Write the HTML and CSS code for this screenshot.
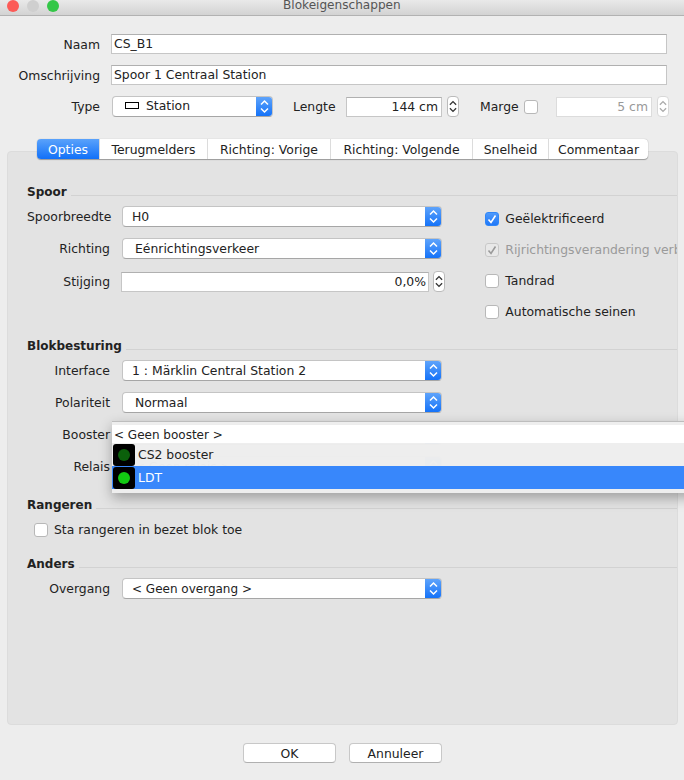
FILE: index.html
```html
<!DOCTYPE html>
<html lang="nl">
<head>
    <meta charset="UTF-8">
    <title>Blokeigenschappen</title>
    <link rel="stylesheet" href="styles.css">
</head>
<body>
    <svg class="defs" width="0" height="0">
        <symbol id="updown" viewBox="0 0 9 15">
            <path d="M1 5.5 L4.5 2 L8 5.5 M1 9.5 L4.5 13 L8 9.5" fill="none" stroke="currentColor" stroke-width="1.5"/>
        </symbol>
    </svg>

    <div class="window">
        <div class="titlebar">
            <span class="light red"></span>
            <span class="light grey"></span>
            <span class="light green"></span>
            <span class="title">Blokeigenschappen</span>
        </div>

        <div class="top-form">
            <div class="top-row">
                <label class="top-label">Naam</label>
                <div class="input wide">CS_B1</div>
            </div>
            <div class="top-row">
                <label class="top-label">Omschrijving</label>
                <div class="input wide">Spoor 1 Centraal Station</div>
            </div>
            <div class="top-row type-row">
                <label class="top-label">Type</label>
                <div class="select type-select">
                    <span class="select-text">
                        <span class="station-icon"></span>Station
                    </span>
                    <span class="select-arrow"><svg width="9" height="15"><use href="#updown"/></svg></span>
                </div>
                <label class="lengte-label">Lengte</label>
                <div class="input number">144 cm</div>
                <span class="stepper"><svg width="9" height="15"><use href="#updown"/></svg></span>
                <label class="marge-label">Marge</label>
                <span class="check"></span>
                <div class="input number disabled">5 cm</div>
                <span class="stepper disabled"><svg width="9" height="15"><use href="#updown"/></svg></span>
            </div>
        </div>

        <div class="tabs">
            <div class="tab active">Opties</div>
            <div class="tab">Terugmelders</div>
            <div class="tab">Richting: Vorige</div>
            <div class="tab">Richting: Volgende</div>
            <div class="tab">Snelheid</div>
            <div class="tab">Commentaar</div>
        </div>

        <div class="panel">
            <h3 class="section-title first">Spoor</h3>
            <div class="spoor">
                <div class="fields">
                    <div class="field">
                        <label>Spoorbreedte</label>
                        <div class="select">
                            <span class="select-text">H0</span>
                            <span class="select-arrow"><svg width="9" height="15"><use href="#updown"/></svg></span>
                        </div>
                    </div>
                    <div class="field">
                        <label>Richting</label>
                        <div class="select">
                            <span class="select-text indent">Eénrichtingsverkeer</span>
                            <span class="select-arrow"><svg width="9" height="15"><use href="#updown"/></svg></span>
                        </div>
                    </div>
                    <div class="field stijging">
                        <label>Stijging</label>
                        <div class="input percent">0,0%</div>
                        <span class="stepper"><svg width="9" height="15"><use href="#updown"/></svg></span>
                    </div>
                </div>
                <div class="checks">
                    <div class="check-row"><span class="check on">
                        <svg width="14" height="14"><path d="M3.5 7.5 L6 10.5 L10.5 3.5" fill="none" stroke="#fff" stroke-width="1.6"/></svg>
                    </span>Geëlektrificeerd</div>
                    <div class="check-row muted"><span class="check off">
                        <svg width="14" height="14"><path d="M3.5 7.5 L6 10.5 L10.5 3.5" fill="none" stroke="#9a9a9a" stroke-width="1.6"/></svg>
                    </span>Rijrichtingsverandering verboden</div>
                    <div class="check-row"><span class="check"></span>Tandrad</div>
                    <div class="check-row"><span class="check"></span>Automatische seinen</div>
                </div>
            </div>

            <h3 class="section-title blok-title">Blokbesturing</h3>
            <div class="fields blok">
                <div class="field">
                    <label>Interface</label>
                    <div class="select">
                        <span class="select-text">1 : Märklin Central Station 2</span>
                        <span class="select-arrow"><svg width="9" height="15"><use href="#updown"/></svg></span>
                    </div>
                </div>
                <div class="field">
                    <label>Polariteit</label>
                    <div class="select">
                        <span class="select-text indent">Normaal</span>
                        <span class="select-arrow"><svg width="9" height="15"><use href="#updown"/></svg></span>
                    </div>
                </div>
                <div class="field">
                    <label>Booster</label>
                    <div class="select">
                        <span class="select-text none">&lt; Geen booster &gt;</span>
                        <span class="select-arrow"><svg width="9" height="15"><use href="#updown"/></svg></span>
                    </div>
                </div>
                <div class="field">
                    <label>Relais</label>
                    <div class="select">
                        <span class="select-text indent none">&lt; Geen relais &gt;</span>
                        <span class="select-arrow"><svg width="9" height="15"><use href="#updown"/></svg></span>
                    </div>
                </div>
            </div>

            <h3 class="section-title rangeren-title">Rangeren</h3>
            <div class="check-row rangeren"><span class="check"></span>Sta rangeren in bezet blok toe</div>

            <h3 class="section-title">Anders</h3>
            <div class="fields">
                <div class="field">
                    <label>Overgang</label>
                    <div class="select">
                        <span class="select-text none">&lt; Geen overgang &gt;</span>
                        <span class="select-arrow"><svg width="9" height="15"><use href="#updown"/></svg></span>
                    </div>
                </div>
            </div>
        </div>

        <div class="buttons">
            <button type="button">OK</button>
            <button type="button">Annuleer</button>
        </div>

        <div class="popup">
            <div class="popup-item plain">&lt; Geen booster &gt;</div>
            <div class="popup-item dim">
                <span class="signal"><svg width="22" height="22"><circle cx="11" cy="11" r="6" fill="#0b600b"/></svg></span>CS2 booster
            </div>
            <div class="popup-item selected">
                <span class="signal"><svg width="22" height="22"><circle cx="11" cy="11" r="6" fill="#12c912"/></svg></span>LDT
            </div>
        </div>
    </div>
</body>
</html>
```

FILE: styles.css
```css
* {
    box-sizing: border-box;
}

html, body {
    margin: 0;
    height: 100%;
    overflow: hidden;
}

body {
    font-family: "DejaVu Sans", sans-serif;
    font-size: 12.4px;
    color: #222;
    background-color: #ededed;
}

.defs {
    position: absolute;
}

.window {
    position: relative;
    width: 684px;
    height: 780px;
    overflow: hidden;
}

.titlebar {
    display: flex;
    align-items: center;
    height: 16px;
    padding-left: 7px;
    gap: 8px;
    overflow: hidden;
    border-bottom: 1px solid #b2b2b2;
    background: linear-gradient(#e9e9e9, #d3d3d3);
}

.light {
    flex: none;
    width: 12px;
    height: 12px;
    margin-top: -4px;
    border-radius: 50%;
}

.red { background-color: #fc5b57; }
.grey { background-color: #cfcfcf; }
.green { background-color: #34c748; }

.title {
    margin-left: 216px;
    margin-top: -5px;
    font-size: 12.1px;
    color: #555;
}

/* top form */
.top-form {
    display: flex;
    flex-direction: column;
    gap: 11px;
    padding-top: 18px;
}

.top-row {
    display: flex;
    align-items: center;
    height: 20px;
}

.top-label {
    width: 100px;
    text-align: right;
}

.input {
    height: 20px;
    padding: 0 2px;
    line-height: 18px;
    border: 1px solid #c6c6c6;
    border-top-color: #b0b0b0;
    background-color: #fff;
    white-space: nowrap;
}

.wide {
    width: 556px;
    margin-left: 11px;
}

.type-row {
    height: 21px;
}

.number {
    width: 96px;
    text-align: right;
    padding-right: 3px;
}

.number.disabled {
    margin-left: 18px;
    color: #999;
    border-color: #dcdcdc;
}

.select {
    display: flex;
    width: 320px;
    height: 21px;
    border: 1px solid #c4c4c4;
    border-bottom-color: #a6a6a6;
    border-radius: 4px;
    background-color: #fff;
    overflow: hidden;
}

.type-select {
    width: 161px;
    margin-left: 12px;
}

.select-text {
    flex: 1;
    display: flex;
    align-items: center;
    padding-left: 9px;
    white-space: nowrap;
}

.select-text.indent {
    padding-left: 12px;
}

.select-text.none {
    font-size: 12px;
}

.type-select .select-text {
    padding-left: 12px;
    padding-bottom: 2px;
}

.station-icon {
    width: 14px;
    height: 7px;
    margin-right: 7px;
    border: 1px solid #000;
    background-color: #fff;
}

.select-arrow {
    display: flex;
    align-items: center;
    justify-content: center;
    flex: none;
    width: 17px;
    margin: -1px -1px -1px 0;
    color: #fff;
    background: linear-gradient(#62a6fb, #1170f8);
}

.stepper {
    display: flex;
    align-items: center;
    justify-content: center;
    flex: none;
    width: 12px;
    height: 21px;
    margin-left: 5px;
    color: #333;
    border: 1px solid #bbb;
    border-radius: 4px;
    background-color: #fff;
}

.stepper svg {
    width: 8px;
}

.stepper.disabled {
    color: #aaa;
    border-color: #d8d8d8;
}

.lengte-label {
    width: 42px;
    margin-left: 20px;
    margin-right: 11px;
    white-space: nowrap;
}

.marge-label {
    width: 38px;
    margin-left: 21px;
    margin-right: 6px;
    white-space: nowrap;
}

.check {
    display: flex;
    flex: none;
    width: 14px;
    height: 14px;
    border: 1px solid #b8b8b8;
    border-radius: 3px;
    background-color: #fff;
}

.check svg {
    margin: -1px;
}

.check.on {
    border-color: #2f86f8;
    background: linear-gradient(#4f9afb, #2078f8);
}

.check.off {
    border-color: #c8c8c8;
    background-color: #e8e8e8;
}

/* tabs */
.tabs {
    position: relative;
    display: grid;
    grid-template-columns: 62px 108px 123px 142px 76px 100px;
    width: 611px;
    height: 20px;
    margin: 22px 0 -8px 37px;
    border-radius: 4px;
    background-color: #fff;
    box-shadow: 0 1px 1px rgba(0, 0, 0, 0.3), 0 0 1px rgba(0, 0, 0, 0.3);
}

.tab {
    display: flex;
    align-items: center;
    justify-content: center;
    border-left: 1px solid #dcdcdc;
    white-space: nowrap;
}

.tab.active {
    color: #fff;
    border-left: none;
    border-radius: 4px 0 0 4px;
    background: linear-gradient(#5aa2fb, #1170f8);
}

/* panel */
.panel {
    width: 671px;
    height: 574px;
    margin-left: 7px;
    padding: 33px 0 0 19px;
    border: 1px solid #dcdcdc;
    border-radius: 4px;
    background-color: #e3e3e3;
    overflow: hidden;
}

.section-title {
    display: flex;
    height: 14px;
    margin: 17px 0 0;
    font-size: 12px;
    font-weight: bold;
    line-height: 14px;
    color: #222;
}

.section-title::after {
    content: "";
    flex: 1;
    height: 1px;
    margin: 10px 0 0 4px;
    background-color: #d2d2d2;
}

.section-title.first {
    margin-top: 0;
}

.section-title.rangeren-title {
    margin-top: 21px;
}

.spoor {
    display: flex;
    height: 123px;
}

.fields {
    display: flex;
    flex-direction: column;
    gap: 11px;
    width: 419px;
    padding-top: 7px;
}

.field {
    display: flex;
    align-items: center;
    height: 21px;
}

.field label {
    width: 83px;
    margin-right: 12px;
    text-align: right;
    white-space: nowrap;
}

.stijging {
    margin-top: 1px;
}

.percent {
    width: 308px;
    height: 20px;
    margin-left: -1px;
    padding-right: 2px;
    text-align: right;
}

.stijging .stepper {
    margin-left: 4px;
}

.checks {
    display: flex;
    flex-direction: column;
    gap: 10px;
    width: 192px;
    margin-left: 40px;
    padding-top: 9px;
    overflow: hidden;
}

.check-row {
    display: flex;
    align-items: center;
    gap: 6px;
    height: 21px;
    white-space: nowrap;
}

.muted {
    color: #9a9a9a;
}

.rangeren {
    margin: 7px 0 0 7px;
}

/* buttons */
.buttons {
    display: flex;
    justify-content: center;
    gap: 13px;
    padding: 18px 0 0 1px;
}

button {
    width: 93px;
    height: 20px;
    padding: 0;
    font: inherit;
    color: #222;
    border: 1px solid #c8c8c8;
    border-bottom-color: #b0b0b0;
    border-radius: 4px;
    background-color: #fff;
}

/* open booster list, lies over the form */
.popup {
    position: absolute;
    left: 112px;
    top: 421px;
    width: 590px;
    height: 72px;
    padding-top: 3px;
    border-top: 1px solid #bdbdbd;
    background-color: rgba(238, 238, 238, 0.98);
    box-shadow: 0 5px 12px rgba(0, 0, 0, 0.3);
}

.popup-item {
    display: flex;
    align-items: center;
    white-space: nowrap;
}

.plain {
    height: 18px;
    padding: 1px 0 0 2px;
    font-size: 12px;
    background-color: rgba(255, 255, 255, 0.96);
}

.dim {
    height: 23px;
}

.selected {
    height: 23px;
    color: #fff;
    background-color: rgba(50, 131, 251, 0.97);
}

.signal {
    display: flex;
    width: 22px;
    height: 22px;
    margin: 0 3px 0 1px;
    border-radius: 3px;
    background-color: #000;
}
```
